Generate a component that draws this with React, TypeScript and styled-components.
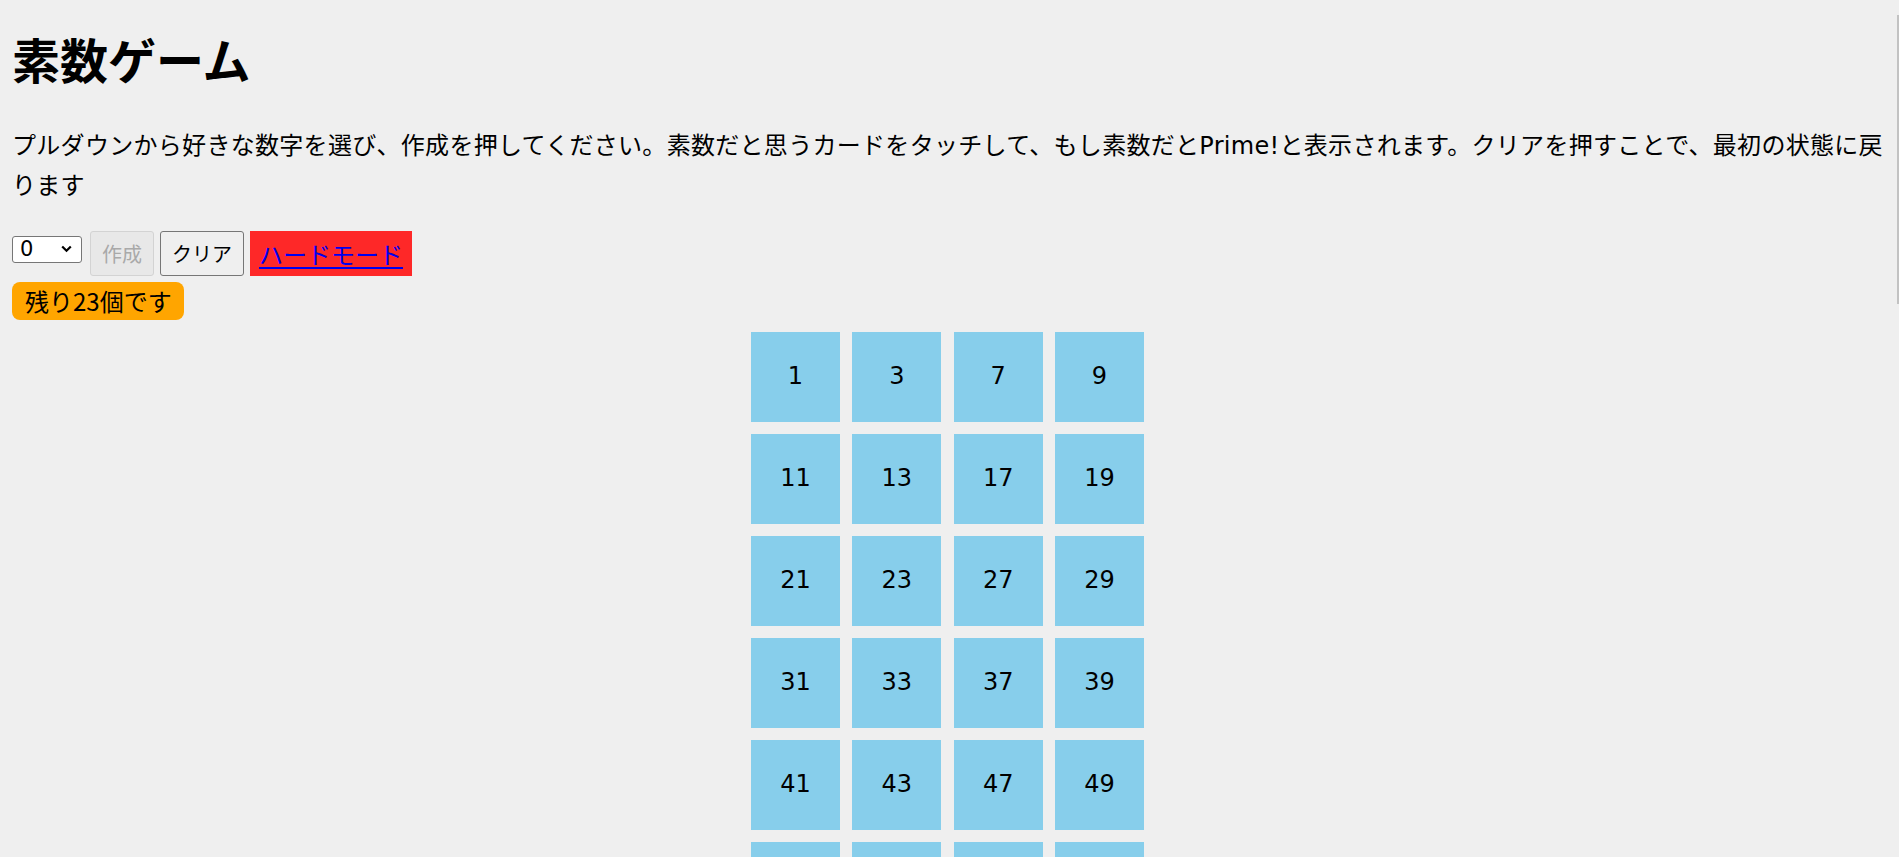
import React from "react";
import styled, { createGlobalStyle } from "styled-components";

const GlobalStyle = createGlobalStyle`
  html { scrollbar-width: none; }
  html::-webkit-scrollbar { display: none; }
  body {
    margin: 0;
    background: #efefef;
    color: #000;
    font-family: "DejaVu Sans", "Noto Sans CJK JP", sans-serif;
  }
`;

const Page = styled.main`
  padding: 0 12px;
  display: flow-root;
`;

const Title = styled.h1`
  margin: 28px 0 38px;
  font-family: "Noto Sans CJK JP", sans-serif;
  font-size: 48px;
  font-weight: 700;
  line-height: 60px;
`;

const Intro = styled.p`
  margin: 0 0 25px;
  font-size: 24px;
  line-height: 40px;
  letter-spacing: 0.3px;
`;

const Controls = styled.div`
  display: flex;
  align-items: flex-start;
  gap: 6px;
`;

const SelectWrap = styled.div`
  position: relative;
  margin-top: 5px;
  margin-right: 2px;
`;

const Select = styled.select`
  appearance: none;
  width: 70px;
  height: 27px;
  padding: 0 0 0 7px;
  border: 1px solid #767676;
  border-radius: 3px;
  background: #fff;
  font-family: "DejaVu Sans", sans-serif;
  font-size: 21px;
  line-height: 25px;
  color: #000;
`;

const Chevron = styled.svg`
  position: absolute;
  right: 10px;
  top: 9px;
  pointer-events: none;
`;

const Button = styled.button`
  height: 45px;
  padding: 0 11px;
  border: 1px solid ${(p) => (p.disabled ? "#d3d3d3" : "#767676")};
  border-radius: 3px;
  background: ${(p) => (p.disabled ? "#e8e8e8" : "#efefef")};
  color: ${(p) => (p.disabled ? "#a9a9a9" : "#000")};
  font-family: "Noto Sans CJK JP", sans-serif;
  font-size: 20px;
`;

const HardMode = styled.div`
  height: 45px;
  padding: 0 9px;
  background: #fe2828;
  display: flex;
  align-items: center;
`;

const HardLink = styled.a`
  font-family: "Noto Sans CJK JP", sans-serif;
  font-size: 24px;
  line-height: 30px;
  color: #0000ee;
  text-decoration: underline;
  text-underline-offset: 3px;
`;

const Badge = styled.div`
  display: inline-block;
  margin-top: 6px;
  height: 38px;
  padding: 0 12px 0 13px;
  border-radius: 8px;
  background: #ffa500;
  font-family: "Noto Sans CJK JP", sans-serif;
  font-size: 24px;
  line-height: 38px;
`;

const Grid = styled.div`
  display: grid;
  grid-template-columns: repeat(4, 89px);
  column-gap: 12.33px;
  row-gap: 12px;
  justify-content: center;
  padding-right: 4px;
  margin-top: 12px;
  margin-bottom: 12px;
`;

const Card = styled.div`
  height: 90px;
  background: #87ceeb;
  display: flex;
  align-items: center;
  justify-content: center;
  font-family: "DejaVu Sans", sans-serif;
  font-size: 24px;
  padding-bottom: 3px;
  box-sizing: border-box;
`;

const ScrollThumb = styled.div`
  position: fixed;
  right: 0;
  top: 15px;
  width: 2px;
  height: 289px;
  background: #c2c2c2;
`;

const numbers: number[] = [];
for (let n = 1; n < 100; n += 2) {
  if (n % 5 !== 0) numbers.push(n);
}

export default function App() {
  return (
    <>
      <GlobalStyle />
      <Page>
        <Title>素数ゲーム</Title>
        <Intro>
          プルダウンから好きな数字を選び、作成を押してください。素数だと思うカードをタッチして、もし素数だとPrime!と表示されます。クリアを押すことで、最初の状態に戻ります
        </Intro>
        <Controls>
          <SelectWrap>
            <Select defaultValue="0">
              <option value="0">0</option>
              <option value="100">100</option>
            </Select>
            <Chevron width="11" height="8" viewBox="0 0 11 8">
              <path d="M1.2 1.5 L5.5 5.8 L9.8 1.5" fill="none" stroke="#000" strokeWidth="2.2" />
            </Chevron>
          </SelectWrap>
          <Button disabled>作成</Button>
          <Button>クリア</Button>
          <HardMode>
            <HardLink href="#">ハードモード</HardLink>
          </HardMode>
        </Controls>
        <Badge>残り23個です</Badge>
        <Grid>
          {numbers.map((n) => (
            <Card key={n}>{n}</Card>
          ))}
        </Grid>
      </Page>
      <ScrollThumb />
    </>
  );
}
